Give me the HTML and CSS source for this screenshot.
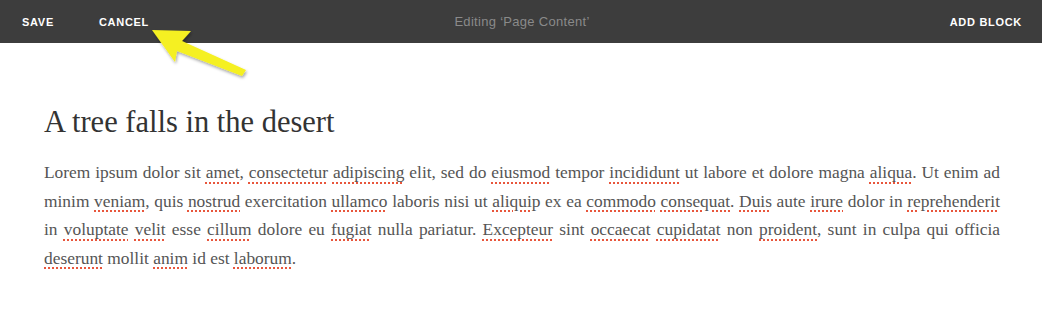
FILE: index.html
```html
<!DOCTYPE html>
<html lang="en">
	<head>
		<title>Editing Page Content</title>
		<link rel="stylesheet" href="styles.css">
	</head>
	<body>
		<div class="toolbar">
			<div class="actions">
				<span class="btn">Save</span>
				<span class="btn">Cancel</span>
			</div>
			<div class="status">Editing ‘Page Content’</div>
			<div class="actions right">
				<span class="btn">Add Block</span>
			</div>
		</div>
		<svg class="arrow" width="120" height="90" viewBox="140 20 120 90">
			<defs>
				<filter id="shadow" x="-20%" y="-20%" width="140%" height="140%">
					<feDropShadow dx="1" dy="2" stdDeviation="1.5" flood-color="#000" flood-opacity="0.35"/>
				</filter>
			</defs>
			<polygon filter="url(#shadow)" fill="#f5f020" points="152,30 191,31 182,41 246,70 242,76 177,51 175,62"/>
		</svg>
		<div class="content">
			<h1>A tree falls in the desert</h1>
			<p>Lorem ipsum dolor sit <span class="sp">amet</span>, <span class="sp">consectetur</span> <span class="sp">adipiscing</span> elit, sed do <span class="sp">eiusmod</span> tempor <span class="sp">incididunt</span> ut labore et dolore magna <span class="sp">aliqua</span>. Ut enim ad minim <span class="sp">veniam</span>, quis <span class="sp">nostrud</span> exercitation <span class="sp">ullamco</span> laboris nisi ut <span class="sp">aliquip</span> ex ea <span class="sp">commodo</span> <span class="sp">consequat</span>. <span class="sp">Duis</span> aute <span class="sp">irure</span> dolor in <span class="sp">reprehenderit</span> in <span class="sp">voluptate</span> <span class="sp">velit</span> esse <span class="sp">cillum</span> dolore eu <span class="sp">fugiat</span> nulla pariatur. <span class="sp">Excepteur</span> sint <span class="sp">occaecat</span> <span class="sp">cupidatat</span> non <span class="sp">proident</span>, sunt in culpa qui officia <span class="sp">deserunt</span> mollit <span class="sp">anim</span> id est <span class="sp">laborum</span>.</p>
		</div>
	</body>
</html>
```

FILE: styles.css
```css
body, html {margin:0;padding:0;background:#fff;}
.toolbar {display:flex;align-items:center;justify-content:space-between;height:43px;background:#3d3d3d;padding:0 20px 0 22px;font-family:"Liberation Sans",sans-serif;}
.actions {display:flex;gap:45px;width:300px;}
.actions.right {justify-content:flex-end;}
.btn {color:#fff;font-weight:700;font-size:11px;text-transform:uppercase;letter-spacing:0.7px;}
.status {color:#8a8a8a;font-size:13px;letter-spacing:0.3px;}
.arrow {position:absolute;left:140px;top:20px;}
.content {padding:59px 42px 0 44px;color:#555;font-family:"Liberation Serif",serif;}
h1 {margin:0 0 16px;font-weight:normal;font-size:30.5px;color:#333;line-height:40px;}
p {margin:0;font-size:17.4px;line-height:28.5px;text-align:justify;}
.sp {text-decoration:underline dotted #e8563c;text-decoration-thickness:2px;text-underline-offset:4px;}
```
